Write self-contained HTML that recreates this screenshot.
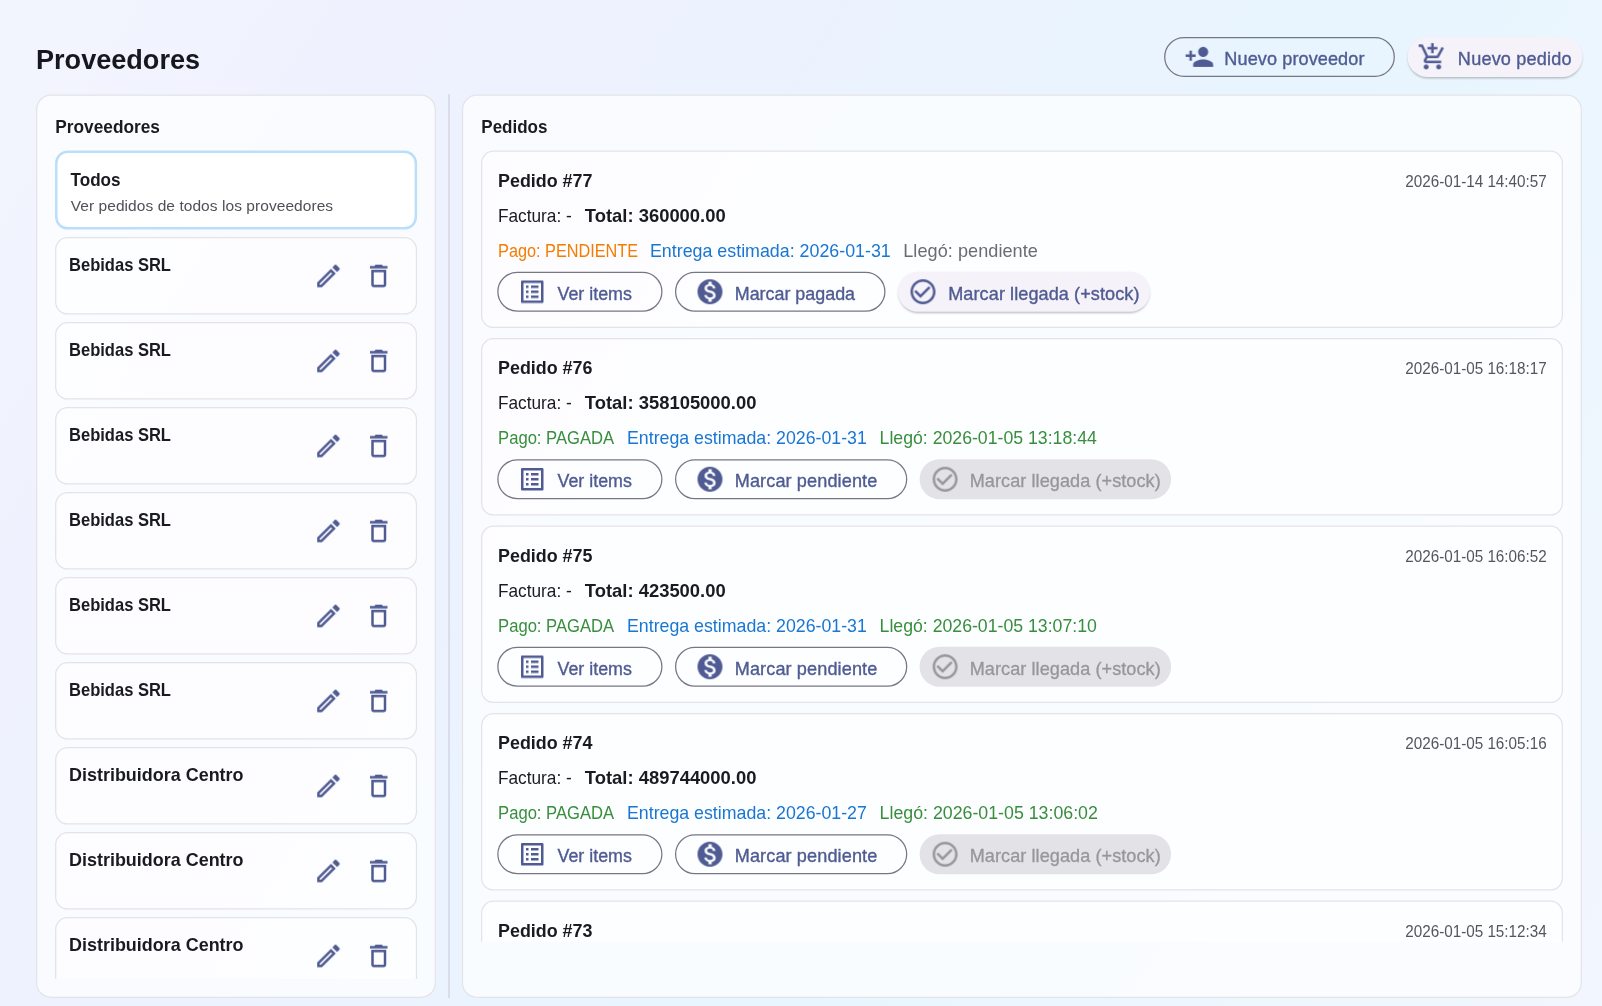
<!DOCTYPE html>
<html lang="es"><head><meta charset="utf-8"><title>Proveedores</title>
<style>
html,body{margin:0;padding:0;width:1602px;height:1006px;overflow:hidden;background:#eef2fd}
svg{display:block;font-family:"Liberation Sans",sans-serif;will-change:transform}
text{white-space:pre}
</style></head><body>
<svg width="1602" height="1006" viewBox="0 0 1602 1006">
<defs>
<linearGradient id="bg" gradientUnits="userSpaceOnUse" x1="0" y1="0" x2="1602" y2="1006">
<stop offset="0" stop-color="#f3f5fe"/><stop offset="0.18" stop-color="#eff2fe"/><stop offset="0.34" stop-color="#ecf2fe"/><stop offset="0.62" stop-color="#e8f5fe"/><stop offset="0.73" stop-color="#ebf6fe"/><stop offset="1" stop-color="#f2f6fe"/>
</linearGradient>
<clipPath id="cl"><rect x="40" y="140" width="392" height="839"/></clipPath>
<clipPath id="cr"><rect x="466" y="140" width="1112" height="801.8"/></clipPath>
<filter id="sh" x="-10%" y="-30%" width="120%" height="180%"><feGaussianBlur stdDeviation="1.3"/></filter>
</defs>
<rect width="1602" height="1006" fill="url(#bg)"/>
<text transform="translate(36.03,69) scale(0.9673,1)" font-size="28" fill="#17181e" font-weight="700">Proveedores</text>
<rect x="1164.725" y="37.525" width="229.550" height="38.750" rx="19.375" fill="none" stroke="#777683" stroke-width="1.25" />
<svg x="1184.40" y="41.90" width="30" height="30" viewBox="0 0 24 24"><path fill="#4f5b92" d="M15 12c2.21 0 4-1.79 4-4s-1.79-4-4-4-4 1.79-4 4 1.79 4 4 4zm-9-2V7H4v3H1v2h3v3h2v-3h3v-2H6zm9 4c-2.67 0-8 1.34-8 4v2h16v-2c0-2.66-5.33-4-8-4z"/></svg>
<text transform="translate(1224.37,65) scale(1.0350,1)" font-size="17.5" letter-spacing="0.084" fill="#4f5b92" stroke="#4f5b92" stroke-width="0.35">Nuevo proveedor</text>
<rect x="1407.90" y="38.70" width="174.00" height="39.5" rx="19.75" fill="rgba(0,0,0,0.27)" filter="url(#sh)"/><rect x="1407.400" y="36.900" width="175.000" height="40.000" rx="20.000" fill="#f5f2fa" />
<svg x="1417.40" y="41.90" width="30" height="30" viewBox="0 0 24 24"><path fill="#4f5b92" d="M11 9h2V6h3V4h-3V1h-2v3H8v2h3v3zm-4 9c-1.1 0-1.99.9-1.99 2S5.9 22 7 22s2-.9 2-2-.9-2-2-2zm10 0c-1.1 0-1.99.9-1.99 2s.89 2 1.99 2 2-.9 2-2-.9-2-2-2zm-9.83-3.25l.03-.12.9-1.63h7.45c.75 0 1.41-.41 1.75-1.03l3.86-7.01L19.42 4h-.01l-1.1 2-2.76 5H8.53l-.13-.27L6.16 6l-.95-2-.94-2H1v2h2l3.6 7.59-1.35 2.45c-.16.28-.25.61-.25.96 0 1.1.9 2 2 2h12v-2H7.42c-.13 0-.25-.11-.25-.25z"/></svg>
<text transform="translate(1457.87,65) scale(1.0350,1)" font-size="17.5" letter-spacing="0.181" fill="#4f5b92" stroke="#4f5b92" stroke-width="0.35">Nuevo pedido</text>
<rect x="36.625" y="95.225" width="398.650" height="902.050" rx="14.375" fill="rgba(255,255,255,0.7)" stroke="#e4e4e8" stroke-width="1.25" />
<rect x="462.525" y="95.225" width="1118.750" height="902.050" rx="14.375" fill="rgba(255,255,255,0.7)" stroke="#e4e4e8" stroke-width="1.25" />
<rect x="448.4" y="94.25" width="1.25" height="903.75" fill="#cfcfdf"/>
<text transform="translate(55.29,133) scale(0.9606,1)" font-size="18" fill="#1a1b20" font-weight="700">Proveedores</text>
<text transform="translate(481.30,133) scale(0.9457,1)" font-size="18" fill="#1a1b20" font-weight="700">Pedidos</text>
<g clip-path="url(#cl)">
<rect x="56.300" y="151.850" width="359.550" height="76.500" rx="11.250" fill="#ffffff" stroke="#bbdefb" stroke-width="2.5" />
<text transform="translate(70.50,186) scale(0.9519,1)" font-size="18" fill="#1a1b20" font-weight="700">Todos</text>
<text transform="translate(70.75,211) scale(1.0350,1)" font-size="15" letter-spacing="0.054" fill="#505058">Ver pedidos de todos los proveedores</text>
<rect x="55.675" y="237.725" width="360.800" height="76.250" rx="11.875" fill="rgba(255,255,255,0.6)" stroke="#e4e4e8" stroke-width="1.25" />
<text transform="translate(69.08,271) scale(0.9200,1)" font-size="18" letter-spacing="-0.022" fill="#1a1b20" font-weight="700">Bebidas SRL</text>
<svg x="313.45" y="260.95" width="30" height="30" viewBox="0 0 24 24"><path fill="#4f5b92" d="M14.06 9.02l.92.92L5.92 19H5v-.92l9.06-9.06M17.66 3c-.25 0-.51.1-.7.29l-1.83 1.83 3.75 3.75 1.83-1.83c.39-.39.39-1.02 0-1.41l-2.34-2.34c-.2-.2-.45-.29-.71-.29zm-3.6 3.19L3 17.25V21h3.75L17.81 9.94l-3.75-3.75z"/></svg>
<svg x="363.75" y="260.95" width="30" height="30" viewBox="0 0 24 24"><path fill="#4f5b92" d="M6 19c0 1.1.9 2 2 2h8c1.1 0 2-.9 2-2V7H6v12zM8 9h8v10H8V9zm7.5-5l-1-1h-5l-1 1H5v2h14V4h-3.5z"/></svg>
<rect x="55.675" y="322.725" width="360.800" height="76.250" rx="11.875" fill="rgba(255,255,255,0.6)" stroke="#e4e4e8" stroke-width="1.25" />
<text transform="translate(69.08,356) scale(0.9200,1)" font-size="18" letter-spacing="-0.022" fill="#1a1b20" font-weight="700">Bebidas SRL</text>
<svg x="313.45" y="345.95" width="30" height="30" viewBox="0 0 24 24"><path fill="#4f5b92" d="M14.06 9.02l.92.92L5.92 19H5v-.92l9.06-9.06M17.66 3c-.25 0-.51.1-.7.29l-1.83 1.83 3.75 3.75 1.83-1.83c.39-.39.39-1.02 0-1.41l-2.34-2.34c-.2-.2-.45-.29-.71-.29zm-3.6 3.19L3 17.25V21h3.75L17.81 9.94l-3.75-3.75z"/></svg>
<svg x="363.75" y="345.95" width="30" height="30" viewBox="0 0 24 24"><path fill="#4f5b92" d="M6 19c0 1.1.9 2 2 2h8c1.1 0 2-.9 2-2V7H6v12zM8 9h8v10H8V9zm7.5-5l-1-1h-5l-1 1H5v2h14V4h-3.5z"/></svg>
<rect x="55.675" y="407.725" width="360.800" height="76.250" rx="11.875" fill="rgba(255,255,255,0.6)" stroke="#e4e4e8" stroke-width="1.25" />
<text transform="translate(69.08,441) scale(0.9200,1)" font-size="18" letter-spacing="-0.022" fill="#1a1b20" font-weight="700">Bebidas SRL</text>
<svg x="313.45" y="430.95" width="30" height="30" viewBox="0 0 24 24"><path fill="#4f5b92" d="M14.06 9.02l.92.92L5.92 19H5v-.92l9.06-9.06M17.66 3c-.25 0-.51.1-.7.29l-1.83 1.83 3.75 3.75 1.83-1.83c.39-.39.39-1.02 0-1.41l-2.34-2.34c-.2-.2-.45-.29-.71-.29zm-3.6 3.19L3 17.25V21h3.75L17.81 9.94l-3.75-3.75z"/></svg>
<svg x="363.75" y="430.95" width="30" height="30" viewBox="0 0 24 24"><path fill="#4f5b92" d="M6 19c0 1.1.9 2 2 2h8c1.1 0 2-.9 2-2V7H6v12zM8 9h8v10H8V9zm7.5-5l-1-1h-5l-1 1H5v2h14V4h-3.5z"/></svg>
<rect x="55.675" y="492.725" width="360.800" height="76.250" rx="11.875" fill="rgba(255,255,255,0.6)" stroke="#e4e4e8" stroke-width="1.25" />
<text transform="translate(69.08,526) scale(0.9200,1)" font-size="18" letter-spacing="-0.022" fill="#1a1b20" font-weight="700">Bebidas SRL</text>
<svg x="313.45" y="515.95" width="30" height="30" viewBox="0 0 24 24"><path fill="#4f5b92" d="M14.06 9.02l.92.92L5.92 19H5v-.92l9.06-9.06M17.66 3c-.25 0-.51.1-.7.29l-1.83 1.83 3.75 3.75 1.83-1.83c.39-.39.39-1.02 0-1.41l-2.34-2.34c-.2-.2-.45-.29-.71-.29zm-3.6 3.19L3 17.25V21h3.75L17.81 9.94l-3.75-3.75z"/></svg>
<svg x="363.75" y="515.95" width="30" height="30" viewBox="0 0 24 24"><path fill="#4f5b92" d="M6 19c0 1.1.9 2 2 2h8c1.1 0 2-.9 2-2V7H6v12zM8 9h8v10H8V9zm7.5-5l-1-1h-5l-1 1H5v2h14V4h-3.5z"/></svg>
<rect x="55.675" y="577.725" width="360.800" height="76.250" rx="11.875" fill="rgba(255,255,255,0.6)" stroke="#e4e4e8" stroke-width="1.25" />
<text transform="translate(69.08,611) scale(0.9200,1)" font-size="18" letter-spacing="-0.022" fill="#1a1b20" font-weight="700">Bebidas SRL</text>
<svg x="313.45" y="600.95" width="30" height="30" viewBox="0 0 24 24"><path fill="#4f5b92" d="M14.06 9.02l.92.92L5.92 19H5v-.92l9.06-9.06M17.66 3c-.25 0-.51.1-.7.29l-1.83 1.83 3.75 3.75 1.83-1.83c.39-.39.39-1.02 0-1.41l-2.34-2.34c-.2-.2-.45-.29-.71-.29zm-3.6 3.19L3 17.25V21h3.75L17.81 9.94l-3.75-3.75z"/></svg>
<svg x="363.75" y="600.95" width="30" height="30" viewBox="0 0 24 24"><path fill="#4f5b92" d="M6 19c0 1.1.9 2 2 2h8c1.1 0 2-.9 2-2V7H6v12zM8 9h8v10H8V9zm7.5-5l-1-1h-5l-1 1H5v2h14V4h-3.5z"/></svg>
<rect x="55.675" y="662.725" width="360.800" height="76.250" rx="11.875" fill="rgba(255,255,255,0.6)" stroke="#e4e4e8" stroke-width="1.25" />
<text transform="translate(69.08,696) scale(0.9200,1)" font-size="18" letter-spacing="-0.022" fill="#1a1b20" font-weight="700">Bebidas SRL</text>
<svg x="313.45" y="685.95" width="30" height="30" viewBox="0 0 24 24"><path fill="#4f5b92" d="M14.06 9.02l.92.92L5.92 19H5v-.92l9.06-9.06M17.66 3c-.25 0-.51.1-.7.29l-1.83 1.83 3.75 3.75 1.83-1.83c.39-.39.39-1.02 0-1.41l-2.34-2.34c-.2-.2-.45-.29-.71-.29zm-3.6 3.19L3 17.25V21h3.75L17.81 9.94l-3.75-3.75z"/></svg>
<svg x="363.75" y="685.95" width="30" height="30" viewBox="0 0 24 24"><path fill="#4f5b92" d="M6 19c0 1.1.9 2 2 2h8c1.1 0 2-.9 2-2V7H6v12zM8 9h8v10H8V9zm7.5-5l-1-1h-5l-1 1H5v2h14V4h-3.5z"/></svg>
<rect x="55.675" y="747.725" width="360.800" height="76.250" rx="11.875" fill="rgba(255,255,255,0.6)" stroke="#e4e4e8" stroke-width="1.25" />
<text transform="translate(69.00,781) scale(0.9983,1)" font-size="18" fill="#1a1b20" font-weight="700">Distribuidora Centro</text>
<svg x="313.45" y="770.95" width="30" height="30" viewBox="0 0 24 24"><path fill="#4f5b92" d="M14.06 9.02l.92.92L5.92 19H5v-.92l9.06-9.06M17.66 3c-.25 0-.51.1-.7.29l-1.83 1.83 3.75 3.75 1.83-1.83c.39-.39.39-1.02 0-1.41l-2.34-2.34c-.2-.2-.45-.29-.71-.29zm-3.6 3.19L3 17.25V21h3.75L17.81 9.94l-3.75-3.75z"/></svg>
<svg x="363.75" y="770.95" width="30" height="30" viewBox="0 0 24 24"><path fill="#4f5b92" d="M6 19c0 1.1.9 2 2 2h8c1.1 0 2-.9 2-2V7H6v12zM8 9h8v10H8V9zm7.5-5l-1-1h-5l-1 1H5v2h14V4h-3.5z"/></svg>
<rect x="55.675" y="832.725" width="360.800" height="76.250" rx="11.875" fill="rgba(255,255,255,0.6)" stroke="#e4e4e8" stroke-width="1.25" />
<text transform="translate(69.00,866) scale(0.9983,1)" font-size="18" fill="#1a1b20" font-weight="700">Distribuidora Centro</text>
<svg x="313.45" y="855.95" width="30" height="30" viewBox="0 0 24 24"><path fill="#4f5b92" d="M14.06 9.02l.92.92L5.92 19H5v-.92l9.06-9.06M17.66 3c-.25 0-.51.1-.7.29l-1.83 1.83 3.75 3.75 1.83-1.83c.39-.39.39-1.02 0-1.41l-2.34-2.34c-.2-.2-.45-.29-.71-.29zm-3.6 3.19L3 17.25V21h3.75L17.81 9.94l-3.75-3.75z"/></svg>
<svg x="363.75" y="855.95" width="30" height="30" viewBox="0 0 24 24"><path fill="#4f5b92" d="M6 19c0 1.1.9 2 2 2h8c1.1 0 2-.9 2-2V7H6v12zM8 9h8v10H8V9zm7.5-5l-1-1h-5l-1 1H5v2h14V4h-3.5z"/></svg>
<rect x="55.675" y="917.725" width="360.800" height="76.250" rx="11.875" fill="rgba(255,255,255,0.6)" stroke="#e4e4e8" stroke-width="1.25" />
<text transform="translate(69.00,951) scale(0.9983,1)" font-size="18" fill="#1a1b20" font-weight="700">Distribuidora Centro</text>
<svg x="313.45" y="940.95" width="30" height="30" viewBox="0 0 24 24"><path fill="#4f5b92" d="M14.06 9.02l.92.92L5.92 19H5v-.92l9.06-9.06M17.66 3c-.25 0-.51.1-.7.29l-1.83 1.83 3.75 3.75 1.83-1.83c.39-.39.39-1.02 0-1.41l-2.34-2.34c-.2-.2-.45-.29-.71-.29zm-3.6 3.19L3 17.25V21h3.75L17.81 9.94l-3.75-3.75z"/></svg>
<svg x="363.75" y="940.95" width="30" height="30" viewBox="0 0 24 24"><path fill="#4f5b92" d="M6 19c0 1.1.9 2 2 2h8c1.1 0 2-.9 2-2V7H6v12zM8 9h8v10H8V9zm7.5-5l-1-1h-5l-1 1H5v2h14V4h-3.5z"/></svg>
</g>
<g clip-path="url(#cr)">
<rect x="481.625" y="151.225" width="1080.750" height="176.250" rx="11.875" fill="rgba(255,255,255,0.6)" stroke="#e4e4e8" stroke-width="1.25" />
<text transform="translate(498.01,187) scale(0.9947,1)" font-size="18" fill="#1a1b20" font-weight="700">Pedido #77</text>
<text transform="translate(1405.30,187) scale(0.9520,1)" font-size="16" fill="#55555c">2026-01-14 14:40:57</text>
<text transform="translate(497.91,222) scale(0.9863,1)" font-size="17.5" fill="#1a1b20">Factura: -</text>
<text transform="translate(584.80,222) scale(1.0234,1)" font-size="18" fill="#1a1b20" font-weight="700">Total: 360000.00</text>
<text transform="translate(498.07,257) scale(0.9295,1)" font-size="17.5" fill="#f57c00">Pago: PENDIENTE</text>
<text transform="translate(649.98,257) scale(1.0191,1)" font-size="17.5" fill="#1976d2">Entrega estimada: 2026-01-31</text>
<text transform="translate(903.22,257) scale(1.0350,1)" font-size="17.5" letter-spacing="0.050" fill="#6b6b70">Llegó: pendiente</text>
<rect x="497.875" y="272.375" width="164.000" height="38.750" rx="19.375" fill="none" stroke="#777683" stroke-width="1.25" />
<svg x="517.25" y="276.75" width="30" height="30" viewBox="0 0 24 24"><path fill="#4f5b92" d="M19 5v14H5V5h14m1.1-2H3.9c-.5 0-.9.4-.9.9v16.2c0 .4.4.9.9.9h16.2c.4 0 .9-.5.9-.9V3.9c0-.5-.5-.9-.9-.9zM11 7h6v2h-6V7zm0 4h6v2h-6v-2zm0 4h6v2h-6zM7 7h2v2H7zm0 4h2v2H7zm0 4h2v2H7z"/></svg>
<text transform="translate(557.50,300) scale(1.0205,1)" font-size="17.5" fill="#4f5b92" stroke="#4f5b92" stroke-width="0.35">Ver items</text>
<rect x="675.625" y="272.375" width="209.250" height="38.750" rx="19.375" fill="none" stroke="#777683" stroke-width="1.25" />
<svg x="695.00" y="276.75" width="30" height="30" viewBox="0 0 24 24"><path fill="#4f5b92" d="M12 2C6.48 2 2 6.48 2 12s4.48 10 10 10 10-4.48 10-10S17.52 2 12 2zm1.41 16.09V20h-2.67v-1.93c-1.71-.36-3.16-1.46-3.27-3.4h1.96c.1 1.05.82 1.87 2.65 1.87 1.96 0 2.4-.98 2.4-1.59 0-.83-.44-1.61-2.67-2.14-2.48-.6-4.18-1.62-4.18-3.67 0-1.72 1.39-2.84 3.11-3.21V4h2.67v1.95c1.86.45 2.79 1.86 2.85 3.39H14.3c-.05-1.11-.64-1.87-2.22-1.87-1.5 0-2.4.68-2.4 1.64 0 .84.65 1.39 2.67 1.91s4.18 1.39 4.18 3.91c-.01 1.83-1.38 2.83-3.12 3.16z"/></svg>
<text transform="translate(734.73,300) scale(1.0235,1)" font-size="17.5" fill="#4f5b92" stroke="#4f5b92" stroke-width="0.35">Marcar pagada</text>
<rect x="898.50" y="273.55" width="251.00" height="39.5" rx="19.75" fill="rgba(0,0,0,0.27)" filter="url(#sh)"/><rect x="898.000" y="271.750" width="252.000" height="40.000" rx="20.000" fill="#f5f2fa" />
<svg x="908.00" y="276.75" width="30" height="30" viewBox="0 0 24 24"><path fill="#4f5b92" d="M16.59 7.58L10 14.17l-3.59-3.58L5 12l5 5 8-8zM12 2C6.48 2 2 6.48 2 12s4.48 10 10 10 10-4.48 10-10S17.52 2 12 2zm0 18c-4.41 0-8-3.59-8-8s3.59-8 8-8 8 3.59 8 8-3.59 8-8 8z"/></svg>
<text transform="translate(948.22,300) scale(1.0350,1)" font-size="17.5" letter-spacing="0.072" fill="#4f5b92" stroke="#4f5b92" stroke-width="0.35">Marcar llegada (+stock)</text>
<rect x="481.625" y="338.725" width="1080.750" height="176.250" rx="11.875" fill="rgba(255,255,255,0.6)" stroke="#e4e4e8" stroke-width="1.25" />
<text transform="translate(498.01,374) scale(0.9947,1)" font-size="18" fill="#1a1b20" font-weight="700">Pedido #76</text>
<text transform="translate(1405.30,374) scale(0.9520,1)" font-size="16" fill="#55555c">2026-01-05 16:18:17</text>
<text transform="translate(497.91,409) scale(0.9863,1)" font-size="17.5" fill="#1a1b20">Factura: -</text>
<text transform="translate(584.80,409) scale(1.0237,1)" font-size="18" fill="#1a1b20" font-weight="700">Total: 358105000.00</text>
<text transform="translate(498.05,444) scale(0.9504,1)" font-size="17.5" fill="#388e3c">Pago: PAGADA</text>
<text transform="translate(626.99,444) scale(1.0149,1)" font-size="17.5" fill="#1976d2">Entrega estimada: 2026-01-31</text>
<text transform="translate(879.59,444) scale(1.0112,1)" font-size="17.5" fill="#388e3c">Llegó: 2026-01-05 13:18:44</text>
<rect x="497.875" y="459.875" width="164.000" height="38.750" rx="19.375" fill="none" stroke="#777683" stroke-width="1.25" />
<svg x="517.25" y="464.25" width="30" height="30" viewBox="0 0 24 24"><path fill="#4f5b92" d="M19 5v14H5V5h14m1.1-2H3.9c-.5 0-.9.4-.9.9v16.2c0 .4.4.9.9.9h16.2c.4 0 .9-.5.9-.9V3.9c0-.5-.5-.9-.9-.9zM11 7h6v2h-6V7zm0 4h6v2h-6v-2zm0 4h6v2h-6zM7 7h2v2H7zm0 4h2v2H7zm0 4h2v2H7z"/></svg>
<text transform="translate(557.50,487) scale(1.0205,1)" font-size="17.5" fill="#4f5b92" stroke="#4f5b92" stroke-width="0.35">Ver items</text>
<rect x="675.625" y="459.875" width="231.050" height="38.750" rx="19.375" fill="none" stroke="#777683" stroke-width="1.25" />
<svg x="695.00" y="464.25" width="30" height="30" viewBox="0 0 24 24"><path fill="#4f5b92" d="M12 2C6.48 2 2 6.48 2 12s4.48 10 10 10 10-4.48 10-10S17.52 2 12 2zm1.41 16.09V20h-2.67v-1.93c-1.71-.36-3.16-1.46-3.27-3.4h1.96c.1 1.05.82 1.87 2.65 1.87 1.96 0 2.4-.98 2.4-1.59 0-.83-.44-1.61-2.67-2.14-2.48-.6-4.18-1.62-4.18-3.67 0-1.72 1.39-2.84 3.11-3.21V4h2.67v1.95c1.86.45 2.79 1.86 2.85 3.39H14.3c-.05-1.11-.64-1.87-2.22-1.87-1.5 0-2.4.68-2.4 1.64 0 .84.65 1.39 2.67 1.91s4.18 1.39 4.18 3.91c-.01 1.83-1.38 2.83-3.12 3.16z"/></svg>
<text transform="translate(734.72,487) scale(1.0350,1)" font-size="17.5" letter-spacing="0.111" fill="#4f5b92" stroke="#4f5b92" stroke-width="0.35">Marcar pendiente</text>
<rect x="919.600" y="459.250" width="251.500" height="40.000" rx="20.000" fill="#e3e3e7" />
<svg x="930.10" y="464.25" width="30" height="30" viewBox="0 0 24 24"><path fill="#96969c" d="M16.59 7.58L10 14.17l-3.59-3.58L5 12l5 5 8-8zM12 2C6.48 2 2 6.48 2 12s4.48 10 10 10 10-4.48 10-10S17.52 2 12 2zm0 18c-4.41 0-8-3.59-8-8s3.59-8 8-8 8 3.59 8 8-3.59 8-8 8z"/></svg>
<text transform="translate(969.72,487) scale(1.0350,1)" font-size="17.5" letter-spacing="0.061" fill="#96969c" stroke="#96969c" stroke-width="0.3">Marcar llegada (+stock)</text>
<rect x="481.625" y="526.225" width="1080.750" height="176.250" rx="11.875" fill="rgba(255,255,255,0.6)" stroke="#e4e4e8" stroke-width="1.25" />
<text transform="translate(498.01,562) scale(0.9947,1)" font-size="18" fill="#1a1b20" font-weight="700">Pedido #75</text>
<text transform="translate(1405.30,562) scale(0.9520,1)" font-size="16" fill="#55555c">2026-01-05 16:06:52</text>
<text transform="translate(497.91,597) scale(0.9863,1)" font-size="17.5" fill="#1a1b20">Factura: -</text>
<text transform="translate(584.80,597) scale(1.0234,1)" font-size="18" fill="#1a1b20" font-weight="700">Total: 423500.00</text>
<text transform="translate(498.05,632) scale(0.9504,1)" font-size="17.5" fill="#388e3c">Pago: PAGADA</text>
<text transform="translate(626.99,632) scale(1.0149,1)" font-size="17.5" fill="#1976d2">Entrega estimada: 2026-01-31</text>
<text transform="translate(879.59,632) scale(1.0112,1)" font-size="17.5" fill="#388e3c">Llegó: 2026-01-05 13:07:10</text>
<rect x="497.875" y="647.375" width="164.000" height="38.750" rx="19.375" fill="none" stroke="#777683" stroke-width="1.25" />
<svg x="517.25" y="651.75" width="30" height="30" viewBox="0 0 24 24"><path fill="#4f5b92" d="M19 5v14H5V5h14m1.1-2H3.9c-.5 0-.9.4-.9.9v16.2c0 .4.4.9.9.9h16.2c.4 0 .9-.5.9-.9V3.9c0-.5-.5-.9-.9-.9zM11 7h6v2h-6V7zm0 4h6v2h-6v-2zm0 4h6v2h-6zM7 7h2v2H7zm0 4h2v2H7zm0 4h2v2H7z"/></svg>
<text transform="translate(557.50,675) scale(1.0205,1)" font-size="17.5" fill="#4f5b92" stroke="#4f5b92" stroke-width="0.35">Ver items</text>
<rect x="675.625" y="647.375" width="231.050" height="38.750" rx="19.375" fill="none" stroke="#777683" stroke-width="1.25" />
<svg x="695.00" y="651.75" width="30" height="30" viewBox="0 0 24 24"><path fill="#4f5b92" d="M12 2C6.48 2 2 6.48 2 12s4.48 10 10 10 10-4.48 10-10S17.52 2 12 2zm1.41 16.09V20h-2.67v-1.93c-1.71-.36-3.16-1.46-3.27-3.4h1.96c.1 1.05.82 1.87 2.65 1.87 1.96 0 2.4-.98 2.4-1.59 0-.83-.44-1.61-2.67-2.14-2.48-.6-4.18-1.62-4.18-3.67 0-1.72 1.39-2.84 3.11-3.21V4h2.67v1.95c1.86.45 2.79 1.86 2.85 3.39H14.3c-.05-1.11-.64-1.87-2.22-1.87-1.5 0-2.4.68-2.4 1.64 0 .84.65 1.39 2.67 1.91s4.18 1.39 4.18 3.91c-.01 1.83-1.38 2.83-3.12 3.16z"/></svg>
<text transform="translate(734.72,675) scale(1.0350,1)" font-size="17.5" letter-spacing="0.111" fill="#4f5b92" stroke="#4f5b92" stroke-width="0.35">Marcar pendiente</text>
<rect x="919.600" y="646.750" width="251.500" height="40.000" rx="20.000" fill="#e3e3e7" />
<svg x="930.10" y="651.75" width="30" height="30" viewBox="0 0 24 24"><path fill="#96969c" d="M16.59 7.58L10 14.17l-3.59-3.58L5 12l5 5 8-8zM12 2C6.48 2 2 6.48 2 12s4.48 10 10 10 10-4.48 10-10S17.52 2 12 2zm0 18c-4.41 0-8-3.59-8-8s3.59-8 8-8 8 3.59 8 8-3.59 8-8 8z"/></svg>
<text transform="translate(969.72,675) scale(1.0350,1)" font-size="17.5" letter-spacing="0.061" fill="#96969c" stroke="#96969c" stroke-width="0.3">Marcar llegada (+stock)</text>
<rect x="481.625" y="713.725" width="1080.750" height="176.250" rx="11.875" fill="rgba(255,255,255,0.6)" stroke="#e4e4e8" stroke-width="1.25" />
<text transform="translate(498.01,749) scale(0.9947,1)" font-size="18" fill="#1a1b20" font-weight="700">Pedido #74</text>
<text transform="translate(1405.30,749) scale(0.9520,1)" font-size="16" fill="#55555c">2026-01-05 16:05:16</text>
<text transform="translate(497.91,784) scale(0.9863,1)" font-size="17.5" fill="#1a1b20">Factura: -</text>
<text transform="translate(584.80,784) scale(1.0237,1)" font-size="18" fill="#1a1b20" font-weight="700">Total: 489744000.00</text>
<text transform="translate(498.05,819) scale(0.9504,1)" font-size="17.5" fill="#388e3c">Pago: PAGADA</text>
<text transform="translate(626.99,819) scale(1.0149,1)" font-size="17.5" fill="#1976d2">Entrega estimada: 2026-01-27</text>
<text transform="translate(879.58,819) scale(1.0160,1)" font-size="17.5" fill="#388e3c">Llegó: 2026-01-05 13:06:02</text>
<rect x="497.875" y="834.875" width="164.000" height="38.750" rx="19.375" fill="none" stroke="#777683" stroke-width="1.25" />
<svg x="517.25" y="839.25" width="30" height="30" viewBox="0 0 24 24"><path fill="#4f5b92" d="M19 5v14H5V5h14m1.1-2H3.9c-.5 0-.9.4-.9.9v16.2c0 .4.4.9.9.9h16.2c.4 0 .9-.5.9-.9V3.9c0-.5-.5-.9-.9-.9zM11 7h6v2h-6V7zm0 4h6v2h-6v-2zm0 4h6v2h-6zM7 7h2v2H7zm0 4h2v2H7zm0 4h2v2H7z"/></svg>
<text transform="translate(557.50,862) scale(1.0205,1)" font-size="17.5" fill="#4f5b92" stroke="#4f5b92" stroke-width="0.35">Ver items</text>
<rect x="675.625" y="834.875" width="231.050" height="38.750" rx="19.375" fill="none" stroke="#777683" stroke-width="1.25" />
<svg x="695.00" y="839.25" width="30" height="30" viewBox="0 0 24 24"><path fill="#4f5b92" d="M12 2C6.48 2 2 6.48 2 12s4.48 10 10 10 10-4.48 10-10S17.52 2 12 2zm1.41 16.09V20h-2.67v-1.93c-1.71-.36-3.16-1.46-3.27-3.4h1.96c.1 1.05.82 1.87 2.65 1.87 1.96 0 2.4-.98 2.4-1.59 0-.83-.44-1.61-2.67-2.14-2.48-.6-4.18-1.62-4.18-3.67 0-1.72 1.39-2.84 3.11-3.21V4h2.67v1.95c1.86.45 2.79 1.86 2.85 3.39H14.3c-.05-1.11-.64-1.87-2.22-1.87-1.5 0-2.4.68-2.4 1.64 0 .84.65 1.39 2.67 1.91s4.18 1.39 4.18 3.91c-.01 1.83-1.38 2.83-3.12 3.16z"/></svg>
<text transform="translate(734.72,862) scale(1.0350,1)" font-size="17.5" letter-spacing="0.111" fill="#4f5b92" stroke="#4f5b92" stroke-width="0.35">Marcar pendiente</text>
<rect x="919.600" y="834.250" width="251.500" height="40.000" rx="20.000" fill="#e3e3e7" />
<svg x="930.10" y="839.25" width="30" height="30" viewBox="0 0 24 24"><path fill="#96969c" d="M16.59 7.58L10 14.17l-3.59-3.58L5 12l5 5 8-8zM12 2C6.48 2 2 6.48 2 12s4.48 10 10 10 10-4.48 10-10S17.52 2 12 2zm0 18c-4.41 0-8-3.59-8-8s3.59-8 8-8 8 3.59 8 8-3.59 8-8 8z"/></svg>
<text transform="translate(969.72,862) scale(1.0350,1)" font-size="17.5" letter-spacing="0.061" fill="#96969c" stroke="#96969c" stroke-width="0.3">Marcar llegada (+stock)</text>
<rect x="481.625" y="901.225" width="1080.750" height="176.250" rx="11.875" fill="rgba(255,255,255,0.6)" stroke="#e4e4e8" stroke-width="1.25" />
<text transform="translate(498.01,937) scale(0.9947,1)" font-size="18" fill="#1a1b20" font-weight="700">Pedido #73</text>
<text transform="translate(1405.30,937) scale(0.9520,1)" font-size="16" fill="#55555c">2026-01-05 15:12:34</text>
<text transform="translate(497.91,972) scale(0.9863,1)" font-size="17.5" fill="#1a1b20">Factura: -</text>
<text transform="translate(584.80,972) scale(1.0234,1)" font-size="18" fill="#1a1b20" font-weight="700">Total: 512300.00</text>
<text transform="translate(498.05,1007) scale(0.9504,1)" font-size="17.5" fill="#388e3c">Pago: PAGADA</text>
<text transform="translate(626.99,1007) scale(1.0149,1)" font-size="17.5" fill="#1976d2">Entrega estimada: 2026-01-27</text>
<text transform="translate(879.59,1007) scale(1.0112,1)" font-size="17.5" fill="#388e3c">Llegó: 2026-01-05 12:14:20</text>
<rect x="497.875" y="1022.375" width="164.000" height="38.750" rx="19.375" fill="none" stroke="#777683" stroke-width="1.25" />
<svg x="517.25" y="1026.75" width="30" height="30" viewBox="0 0 24 24"><path fill="#4f5b92" d="M19 5v14H5V5h14m1.1-2H3.9c-.5 0-.9.4-.9.9v16.2c0 .4.4.9.9.9h16.2c.4 0 .9-.5.9-.9V3.9c0-.5-.5-.9-.9-.9zM11 7h6v2h-6V7zm0 4h6v2h-6v-2zm0 4h6v2h-6zM7 7h2v2H7zm0 4h2v2H7zm0 4h2v2H7z"/></svg>
<text transform="translate(557.50,1050) scale(1.0205,1)" font-size="17.5" fill="#4f5b92" stroke="#4f5b92" stroke-width="0.35">Ver items</text>
<rect x="675.625" y="1022.375" width="231.050" height="38.750" rx="19.375" fill="none" stroke="#777683" stroke-width="1.25" />
<svg x="695.00" y="1026.75" width="30" height="30" viewBox="0 0 24 24"><path fill="#4f5b92" d="M12 2C6.48 2 2 6.48 2 12s4.48 10 10 10 10-4.48 10-10S17.52 2 12 2zm1.41 16.09V20h-2.67v-1.93c-1.71-.36-3.16-1.46-3.27-3.4h1.96c.1 1.05.82 1.87 2.65 1.87 1.96 0 2.4-.98 2.4-1.59 0-.83-.44-1.61-2.67-2.14-2.48-.6-4.18-1.62-4.18-3.67 0-1.72 1.39-2.84 3.11-3.21V4h2.67v1.95c1.86.45 2.79 1.86 2.85 3.39H14.3c-.05-1.11-.64-1.87-2.22-1.87-1.5 0-2.4.68-2.4 1.64 0 .84.65 1.39 2.67 1.91s4.18 1.39 4.18 3.91c-.01 1.83-1.38 2.83-3.12 3.16z"/></svg>
<text transform="translate(734.72,1050) scale(1.0350,1)" font-size="17.5" letter-spacing="0.111" fill="#4f5b92" stroke="#4f5b92" stroke-width="0.35">Marcar pendiente</text>
<rect x="919.600" y="1021.750" width="251.500" height="40.000" rx="20.000" fill="#e3e3e7" />
<svg x="930.10" y="1026.75" width="30" height="30" viewBox="0 0 24 24"><path fill="#96969c" d="M16.59 7.58L10 14.17l-3.59-3.58L5 12l5 5 8-8zM12 2C6.48 2 2 6.48 2 12s4.48 10 10 10 10-4.48 10-10S17.52 2 12 2zm0 18c-4.41 0-8-3.59-8-8s3.59-8 8-8 8 3.59 8 8-3.59 8-8 8z"/></svg>
<text transform="translate(969.72,1050) scale(1.0350,1)" font-size="17.5" letter-spacing="0.061" fill="#96969c" stroke="#96969c" stroke-width="0.3">Marcar llegada (+stock)</text>
</g>
</svg>
</body></html>
